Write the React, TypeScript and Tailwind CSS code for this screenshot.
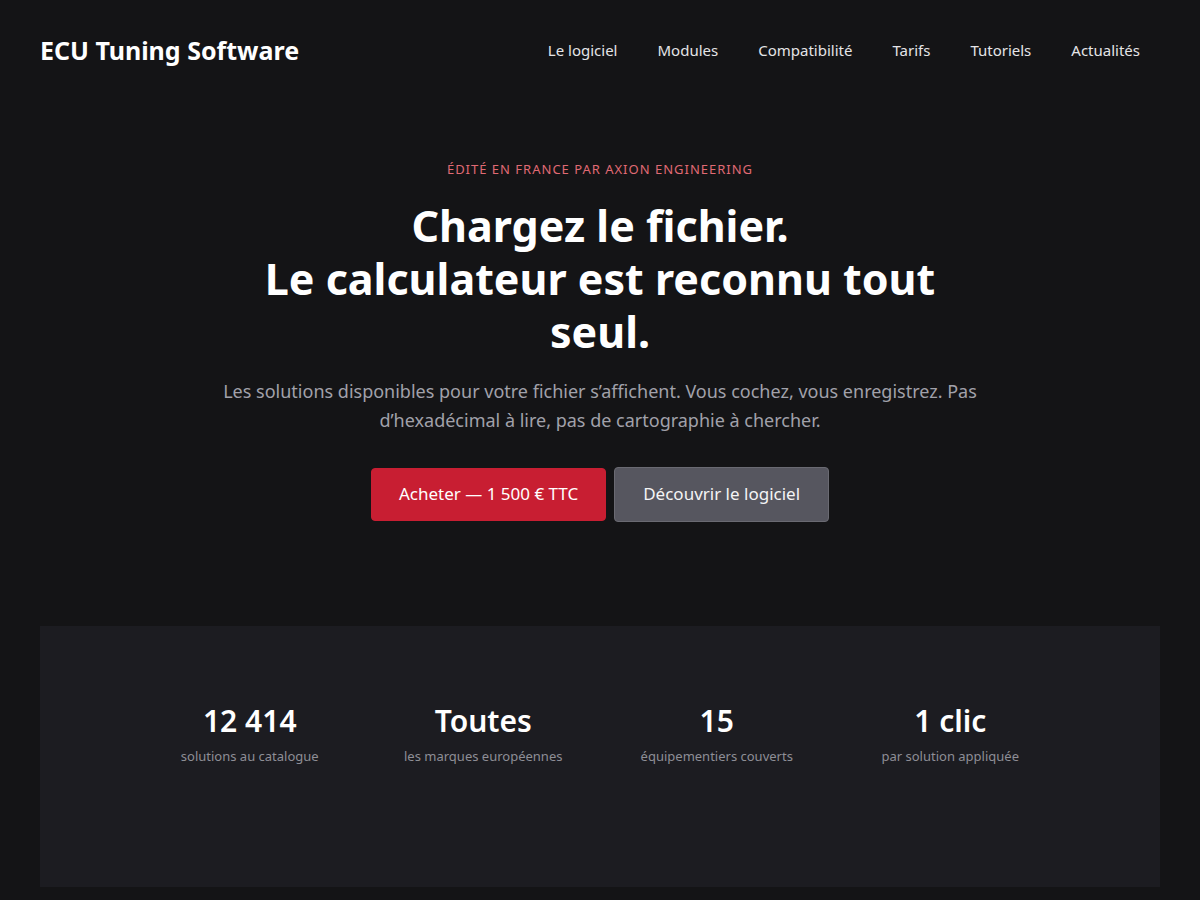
import React from 'react';

const NAV_LINKS = ['Le logiciel', 'Modules', 'Compatibilité', 'Tarifs', 'Tutoriels', 'Actualités'];

const STATS = [
  { value: '12 414', label: 'solutions au catalogue' },
  { value: 'Toutes', label: 'les marques européennes' },
  { value: '15', label: 'équipementiers couverts' },
  { value: '1 clic', label: 'par solution appliquée' },
];

export default function App() {
  return (
    <div className="min-h-[900px] bg-[#141416] text-white font-['Noto_Sans',sans-serif]">
      {/* Header */}
      <header className="flex items-center justify-between px-10 h-[101px]">
        <a href="#" className="text-[25px] font-bold">ECU Tuning Software</a>
        <nav className="flex items-center">
          {NAV_LINKS.map(link => (
            <a key={link} href="#" className="px-5 text-[15px] text-[#e4e4e7]">
              {link}
            </a>
          ))}
        </nav>
      </header>

      {/* Hero */}
      <section className="flex flex-col items-center text-center pt-[59px] pb-[104px]">
        <p className="text-[13px] tracking-[1px] uppercase text-[#e06a74]">
          Édité en France par Axion Engineering
        </p>
        <h1 className="mt-[19px] max-w-[740px] text-[43px] leading-[53px] font-bold">
          Chargez le fichier.
          <br />
          Le calculateur est reconnu tout seul.
        </h1>
        <p className="mt-[19px] max-w-[770px] text-[18px] leading-[29px] text-[#a1a1aa]">
          Les solutions disponibles pour votre fichier s’affichent. Vous cochez, vous enregistrez. Pas d’hexadécimal à lire, pas de cartographie à chercher.
        </p>
        <div className="mt-[33px] flex gap-2">
          <button className="h-[53px] px-[27px] rounded-[4px] bg-[#c81e32] border border-[#c81e32] text-[17px] text-white">
            Acheter — 1 500 € TTC
          </button>
          <button className="h-[55px] -mt-px px-[28px] rounded-[4px] bg-[#56565f] border border-[#6a6a72] text-[17px] text-[#f4f4f5]">
            Découvrir le logiciel
          </button>
        </div>
      </section>

      {/* Stats */}
      <section className="mx-10 h-[261px] bg-[#1c1c21]">
        <div className="pt-[76px] mx-auto w-[934px] grid grid-cols-4">
          {STATS.map(stat => (
            <div key={stat.label} className="flex flex-col items-center">
              <div className="text-[30px] leading-[38px] font-semibold">{stat.value}</div>
              <div className="mt-[6px] text-[13px] leading-[20px] text-[#8e8e96]">{stat.label}</div>
            </div>
          ))}
        </div>
      </section>
    </div>
  );
}
